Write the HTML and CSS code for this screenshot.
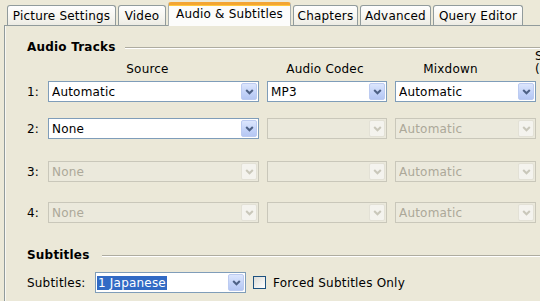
FILE: index.html
```html
<!DOCTYPE html>
<html lang="en">
<head>
    <meta charset="UTF-8">
    <title>Audio &amp; Subtitles</title>
    <link rel="stylesheet" href="styles.css">
</head>
<body>
    <div class="tabs">
        <div class="tab tab-picture">Picture Settings</div>
        <div class="tab tab-video">Video</div>
        <div class="tab tab-audio active">Audio &amp; Subtitles</div>
        <div class="tab tab-chapters">Chapters</div>
        <div class="tab tab-advanced">Advanced</div>
        <div class="tab tab-query">Query Editor</div>
    </div>

    <div class="panel">
        <div class="group-title">
            <span>Audio Tracks</span>
            <div class="rule"></div>
        </div>

        <div class="col-heads">
            <div class="col-label"></div>
            <div class="col-source">Source</div>
            <div class="col-codec">Audio Codec</div>
            <div class="col-mix">Mixdown</div>
            <div class="col-rate">S<br>(</div>
        </div>

        <div class="track track-1">
            <div class="col-label">1:</div>
            <div class="combo col-source"><span class="value">Automatic</span><span class="drop"><svg width="9" height="6" viewBox="0 0 9 6"><path d="M1.2 1 L4.5 4.3 L7.8 1" /></svg></span></div>
            <div class="combo col-codec"><span class="value">MP3</span><span class="drop"><svg width="9" height="6" viewBox="0 0 9 6"><path d="M1.2 1 L4.5 4.3 L7.8 1" /></svg></span></div>
            <div class="combo col-mix"><span class="value">Automatic</span><span class="drop"><svg width="9" height="6" viewBox="0 0 9 6"><path d="M1.2 1 L4.5 4.3 L7.8 1" /></svg></span></div>
        </div>

        <div class="track track-2">
            <div class="col-label">2:</div>
            <div class="combo col-source"><span class="value">None</span><span class="drop"><svg width="9" height="6" viewBox="0 0 9 6"><path d="M1.2 1 L4.5 4.3 L7.8 1" /></svg></span></div>
            <div class="combo disabled col-codec"><span class="value"></span><span class="drop"><svg width="9" height="6" viewBox="0 0 9 6"><path d="M1.2 1 L4.5 4.3 L7.8 1" /></svg></span></div>
            <div class="combo disabled col-mix"><span class="value">Automatic</span><span class="drop"><svg width="9" height="6" viewBox="0 0 9 6"><path d="M1.2 1 L4.5 4.3 L7.8 1" /></svg></span></div>
        </div>

        <div class="track track-3">
            <div class="col-label">3:</div>
            <div class="combo disabled col-source"><span class="value">None</span><span class="drop"><svg width="9" height="6" viewBox="0 0 9 6"><path d="M1.2 1 L4.5 4.3 L7.8 1" /></svg></span></div>
            <div class="combo disabled col-codec"><span class="value"></span><span class="drop"><svg width="9" height="6" viewBox="0 0 9 6"><path d="M1.2 1 L4.5 4.3 L7.8 1" /></svg></span></div>
            <div class="combo disabled col-mix"><span class="value">Automatic</span><span class="drop"><svg width="9" height="6" viewBox="0 0 9 6"><path d="M1.2 1 L4.5 4.3 L7.8 1" /></svg></span></div>
        </div>

        <div class="track track-4">
            <div class="col-label">4:</div>
            <div class="combo disabled col-source"><span class="value">None</span><span class="drop"><svg width="9" height="6" viewBox="0 0 9 6"><path d="M1.2 1 L4.5 4.3 L7.8 1" /></svg></span></div>
            <div class="combo disabled col-codec"><span class="value"></span><span class="drop"><svg width="9" height="6" viewBox="0 0 9 6"><path d="M1.2 1 L4.5 4.3 L7.8 1" /></svg></span></div>
            <div class="combo disabled col-mix"><span class="value">Automatic</span><span class="drop"><svg width="9" height="6" viewBox="0 0 9 6"><path d="M1.2 1 L4.5 4.3 L7.8 1" /></svg></span></div>
        </div>

        <div class="group-title subs-title">
            <span>Subtitles</span>
            <div class="rule"></div>
        </div>

        <div class="subs-row">
            <div class="subs-label">Subtitles:</div>
            <div class="combo subs-combo"><span class="value"><span class="selected">1 Japanese</span></span><span class="drop"><svg width="9" height="6" viewBox="0 0 9 6"><path d="M1.2 1 L4.5 4.3 L7.8 1" /></svg></span></div>
            <div class="checkbox"></div>
            <div class="check-label">Forced Subtitles Only</div>
        </div>
    </div>
</body>
</html>
```

FILE: styles.css
```css
:root {
    --face: #ece9d8;
    --tab-border: #919b9c;
    --combo-border: #7f9db9;
    --disabled-border: #c9c7ba;
    --disabled-text: #aca899;
    --select: #316ac5;
}

* {
    margin: 0;
    padding: 0;
    box-sizing: border-box;
}

body {
    font-family: "DejaVu Sans", Verdana, sans-serif;
    font-size: 12px;
    letter-spacing: 0.2px;
    color: #000;
    background: var(--face);
    width: 540px;
    height: 301px;
    overflow: hidden;
}

/* tab strip */

.tabs {
    display: flex;
    align-items: flex-end;
    gap: 2px;
    height: 25px;
    padding: 2px 0 0 7px;
}

.tab {
    height: 20px;
    display: flex;
    align-items: center;
    justify-content: center;
    border: 1px solid var(--tab-border);
    border-bottom: none;
    border-radius: 3px 3px 0 0;
    background: linear-gradient(#fefefe, #f6f5ef 60%, #ecebe4);
    white-space: nowrap;
    padding-top: 1px;
}

.tab.active {
    height: 24px;
    margin-bottom: -1px;
    position: relative;
    z-index: 1;
    border-top: 3px solid #f3a533;
    border-left-color: #a9b0b1;
    border-right-color: #a9b0b1;
    background: #fcfcfb;
    padding-top: 0;
    padding-bottom: 3px;
    box-shadow: inset 0 1px 0 #ffc83c;
}

.tab-picture { width: 109px; }
.tab-video { width: 48px; }
.tab-audio { width: 123px; }
.tab-chapters { width: 65px; }
.tab-advanced { width: 71px; }
.tab-query { width: 90px; }

/* panel */

.panel {
    margin-left: 4px;
    height: 290px;
    border: 1px solid var(--tab-border);
    border-right: none;
    border-bottom: none;
    padding: 14px 0 0 22px;
    background: #ebe8d8;
    box-shadow: inset 1px 0 0 #f8f7f2;
}

.group-title {
    display: flex;
    align-items: center;
    gap: 10px;
    height: 14px;
    font-weight: bold;
    white-space: nowrap;
}

.rule {
    flex: 1;
    height: 2px;
    border-top: 1px solid #aeaca0;
    border-bottom: 1px solid #fff;
    margin-top: 2px;
}

.col-heads {
    display: flex;
    gap: 8px;
    align-items: flex-end;
    margin-top: 8px;
    height: 14px;
    text-align: center;
    white-space: nowrap;
}

.col-heads .col-source { padding-right: 12px; }
.col-heads .col-codec { padding-right: 4px; }
.col-heads .col-mix { padding-right: 30px; }

.col-heads .col-rate {
    text-align: left;
    margin-left: -9px;
    line-height: 13px;
}

.col-label { width: 13px; flex: none; }
.col-source { width: 211px; flex: none; }
.col-codec { width: 120px; flex: none; }
.col-mix { width: 141px; flex: none; }
.col-rate { width: 30px; flex: none; }

.track {
    display: flex;
    align-items: center;
    gap: 8px;
    height: 21px;
}

.track-1 { margin-top: 5px; }
.track-2 { margin-top: 16px; }
.track-3 { margin-top: 22px; }
.track-4 { margin-top: 20px; }

.track .col-label {
    white-space: nowrap;
}

/* combo boxes */

.combo {
    height: 21px;
    display: flex;
    align-items: center;
    border: 1px solid var(--combo-border);
    background: #fff;
    padding: 0 1px 0 3px;
}

.combo .value {
    flex: 1;
    white-space: nowrap;
    overflow: hidden;
}

.drop {
    width: 16px;
    height: 17px;
    flex: none;
    display: flex;
    align-items: center;
    justify-content: center;
    border: 1px solid #bccbf1;
    border-radius: 2px;
    background: linear-gradient(#dce6fd, #c2d2f8 60%, #b5c7f3);
}

.drop path {
    fill: none;
    stroke: #4d6185;
    stroke-width: 2;
}

.combo.disabled {
    border-color: var(--disabled-border);
    background: #ebe9dc;
    color: var(--disabled-text);
}

.combo.disabled .drop {
    border-color: #e3e1d6;
    background: #f4f3ee;
}

.combo.disabled .drop path {
    stroke: #c9c7ba;
}

/* subtitles */

.subs-title {
    margin-top: 25px;
    gap: 12px;
}

.subs-row {
    display: flex;
    align-items: center;
    height: 21px;
    margin-top: 10px;
}

.subs-label {
    width: 68px;
    flex: none;
}

.subs-combo {
    width: 151px;
    flex: none;
    padding-left: 1px;
}

.selected {
    background: var(--select);
    color: #fff;
    padding: 1px 1px;
}

.checkbox {
    width: 13px;
    height: 13px;
    margin-left: 7px;
    border: 1px solid #1c5180;
    background: linear-gradient(135deg, #dcdcd7, #fff);
}

.check-label {
    margin-left: 7px;
    white-space: nowrap;
}
```
